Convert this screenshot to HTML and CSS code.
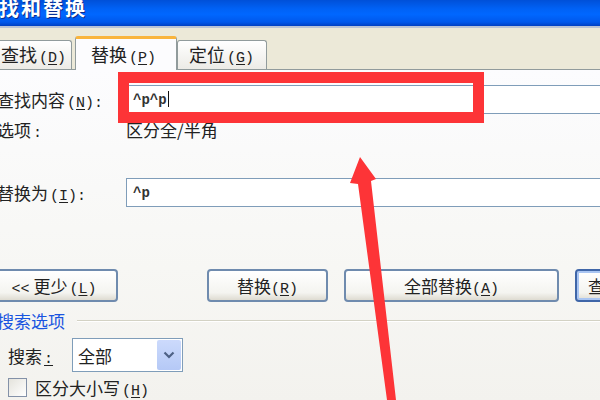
FILE: index.html
```html
<!DOCTYPE html>
<html lang="zh-CN">
<head>
    <meta charset="UTF-8">
    <meta name="viewport" content="width=device-width, initial-scale=1.0">
    <title>查找和替换</title>
    <link rel="stylesheet" href="styles.css">
</head>
<body>
    <div class="dialog">
        <div class="titlebar"><span class="title">查找和替换</span></div>

        <div class="tabstrip">
            <div class="tab tab-find">查找<span class="key">(<u>D</u>)</span></div>
            <div class="tab tab-active">替换<span class="key">(<u>P</u>)</span></div>
            <div class="tab tab-goto">定位<span class="key">(<u>G</u>)</span></div>
        </div>

        <div class="panel">
            <div class="row row-find">
                <label class="label" for="findText">查找内容<span class="key">(<u>N</u>):</span></label>
                <div class="field" id="findText">^p^p<span class="caret"></span></div>
            </div>
            <div class="row row-options">
                <span class="label">选项<span class="key">:</span></span>
                <span class="value">区分全/半角</span>
            </div>
            <div class="row row-replace">
                <label class="label" for="replaceText">替换为<span class="key">(<u>I</u>):</span></label>
                <div class="field" id="replaceText">^p</div>
            </div>

            <div class="row row-buttons">
                <button class="btn btn-less"><span class="key">&lt;&lt;</span> 更少<span class="key">(<u>L</u>)</span></button>
                <button class="btn btn-replace">替换<span class="key">(<u>R</u>)</span></button>
                <button class="btn btn-all">全部替换<span class="key">(<u>A</u>)</span></button>
                <button class="btn btn-next">查找下一处<span class="key">(<u>F</u>)</span></button>
            </div>

            <div class="row row-group">
                <span class="group-title">搜索选项</span>
                <span class="group-line"></span>
            </div>
            <div class="row row-search">
                <span class="search-label">搜索<span class="key"><u>:</u></span></span>
                <div class="select">
                    <span class="select-text">全部</span>
                    <span class="dropdown">
                        <svg width="12" height="8" viewBox="0 0 12 8"><path d="M1.5 1.5 L6 6 L10.5 1.5" fill="none" stroke="#4D6185" stroke-width="2.2"/></svg>
                    </span>
                </div>
            </div>
            <div class="row row-check">
                <span class="checkbox"></span>
                <span class="check-label">区分大小写<span class="key">(<u>H</u>)</span></span>
            </div>
        </div>

        <!-- annotation drawn over the screenshot -->
        <div class="highlight"></div>
        <svg class="arrow" width="600" height="400" viewBox="0 0 600 400">
            <polygon points="360,157 376,179 371,181 396,400 387,400 358,184 350,183" fill="#FD3437"/>
        </svg>
    </div>
</body>
</html>
```

FILE: styles.css
```css
body {
    margin: 0;
    font-family: "Noto Sans CJK SC", "Noto Sans", sans-serif;
    font-size: 17px;
    color: #222;
    background: #F4F3EE;
}

.dialog {
    position: relative;
    width: 600px;
    height: 400px;
    overflow: hidden;
}

u {
    text-decoration-thickness: 1px;
    text-underline-offset: 2px;
}

/* half-width latin, like the old bitmap font */
.key {
    font-family: "Liberation Mono", monospace;
    font-size: 15px;
    margin-left: 2px;
}

/* title bar */
.titlebar {
    height: 26px;
    overflow: hidden;
    background: linear-gradient(#0050D8 0%, #0062F6 35%, #0067FF 55%, #0058EC 85%, #0040C2 100%);
    border-bottom: 2px solid #B9C3D6;
}

.title {
    display: block;
    margin-left: -23px;
    margin-top: -5px;
    font-size: 20px;
    font-weight: bold;
    line-height: 26px;
    letter-spacing: 2px;
    color: #fff;
    text-shadow: 1px 1px 0 #0A2A8A;
}

/* tabs */
.tabstrip {
    height: 41px;
    display: flex;
    align-items: flex-end;
    background: #ECE9D8;
}

.tab {
    height: 29px;
    box-sizing: border-box;
    border: 1px solid #919B9C;
    border-bottom: none;
    border-radius: 3px 3px 0 0;
    background: linear-gradient(#FFFFFF, #ECEBE6);
    font-size: 18px;
    line-height: 27px;
    white-space: nowrap;
}

.tab-find {
    margin-left: -20px;
    width: 92px;
    padding-left: 20px;
}

.tab-active {
    position: relative;
    z-index: 1;
    margin-left: 3px;
    margin-bottom: -1px;
    width: 102px;
    height: 34px;
    padding-left: 15px;
    background: #FCFCFE;
    border-top: 3px solid #F9B43C;
    line-height: 30px;
}

.tab-goto {
    width: 90px;
    padding-left: 11px;
}

/* panel */
.panel {
    height: 330px;
    border-top: 1px solid #919B9C;
    background: linear-gradient(#FCFCFE, #F7F7F4 60%, #F3F2EE);
}

.row {
    display: flex;
    align-items: center;
    white-space: nowrap;
}

.label {
    flex: none;
    width: 129px;
    margin-left: -3px;
}

.field {
    flex: 1;
    height: 29px;
    box-sizing: border-box;
    margin-right: -10px;
    padding-left: 6px;
    border: 1px solid #7F9DB9;
    background: #fff;
    font-family: "Liberation Mono", monospace;
    font-size: 14px;
    font-weight: bold;
    line-height: 29px;
    color: #333;
}

.caret {
    display: inline-block;
    width: 1px;
    height: 16px;
    margin-left: 1px;
    vertical-align: -3px;
    background: #111;
}

.row-find {
    margin-top: 15px;
    height: 29px;
}

.row-options {
    margin-top: 5px;
    height: 20px;
}

.row-replace {
    margin-top: 39px;
    height: 29px;
}

/* buttons */
.row-buttons {
    margin-top: 62px;
    height: 33px;
}

.btn {
    flex: none;
    height: 33px;
    box-sizing: border-box;
    padding: 0;
    border: 2px solid #6F8BAE;
    border-radius: 4px;
    background: linear-gradient(#FFFFFF, #F4F4F0 75%, #DEDBD1);
    font-family: inherit;
    font-size: 17px;
    color: #222;
    line-height: 29px;
    text-align: center;
    white-space: nowrap;
}

.btn .key:first-child {
    margin-left: 0;
}

.btn-less {
    margin-left: -10px;
    width: 128px;
}

.btn-replace {
    margin-left: 89px;
    width: 121px;
}

.btn-all {
    margin-left: 16px;
    width: 215px;
}

.btn-next {
    margin-left: 16px;
    width: 140px;
    padding-left: 11px;
    text-align: left;
    border-color: #3F66A8;
    box-shadow: inset 0 0 0 2px #A9C5F2;
}

/* search options */
.row-group {
    margin-top: 8px;
    height: 20px;
}

.group-title {
    margin-left: -3px;
    color: #1A55E0;
}

.group-line {
    flex: 1;
    height: 1px;
    margin-left: 12px;
    background: #D3D2C4;
    box-shadow: 0 1px 0 #fff;
}

.row-search {
    margin-top: 8px;
    height: 34px;
}

.search-label {
    width: 64px;
    margin-left: 8px;
}

.select {
    display: flex;
    align-items: center;
    width: 111px;
    height: 34px;
    box-sizing: border-box;
    border: 1px solid #7F9DB9;
    background: #fff;
}

.select-text {
    margin-left: 5px;
}

.dropdown {
    display: flex;
    align-items: center;
    justify-content: center;
    margin-left: auto;
    margin-right: 1px;
    width: 24px;
    height: 30px;
    border-radius: 2px;
    background: linear-gradient(#CCDAFC, #B5C9F6);
}

.row-check {
    margin-top: 5px;
    height: 21px;
}

.checkbox {
    width: 19px;
    height: 19px;
    margin-left: 8px;
    box-sizing: border-box;
    border: 1px solid #8391A8;
    background: linear-gradient(135deg, #E4E3DC, #FFFFFF);
}

.check-label {
    margin-left: 8px;
}

/* annotation */
.highlight {
    position: absolute;
    left: 118px;
    top: 72px;
    width: 366px;
    height: 51px;
    box-sizing: border-box;
    border: 11px solid #FD3437;
}

.arrow {
    position: absolute;
    left: 0;
    top: 0;
}
```
